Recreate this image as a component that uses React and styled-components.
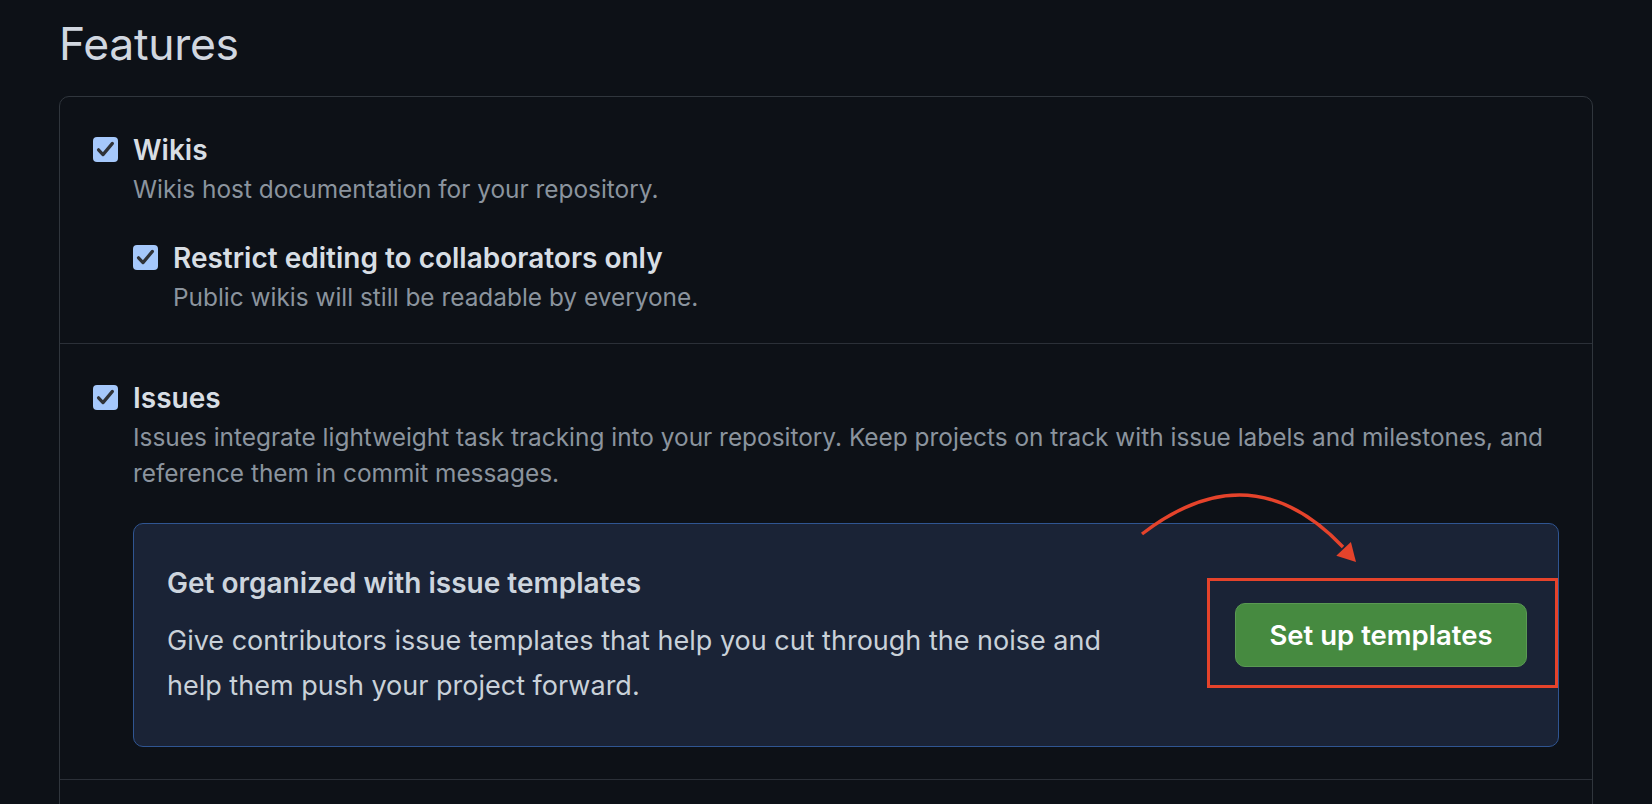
import styled, { createGlobalStyle } from "styled-components";

const GlobalStyle = createGlobalStyle`
  html, body {
    margin: 0;
    background: #0d1117;
  }
  body {
    font-family: Inter, "Liberation Sans", sans-serif;
    color: #e6edf3;
    overflow: hidden;
  }
`;

const Page = styled.div`
  padding: 16px 59px 0;
`;

const Heading = styled.h2`
  margin: 0 0 24px;
  font-size: 44.5px;
  line-height: 56px;
  font-weight: 400;
  letter-spacing: -0.3px;
  color: #d1d7e0;
`;

const Panel = styled.div`
  border: 1px solid #30363d;
  border-radius: 10px;
`;

const Section = styled.div`
  padding: ${(p) => p.$top || 37}px 33px ${(p) => p.$bottom || 28}px;
  min-height: ${(p) => p.$min || 0}px;
  & + & {
    border-top: 1px solid #2b3038;
  }
`;

const Option = styled.div`
  display: flex;
  gap: 15px;
  margin-top: ${(p) => (p.$nested ? "35px" : "0")};
`;

const CheckBox = styled.span`
  flex: none;
  width: 25px;
  height: 25px;
  margin-top: 3px;
  border-radius: 4px;
  background: #a5c8fb;
  display: flex;
  align-items: center;
  justify-content: center;
`;

const OptionBody = styled.div`
  flex: 1;
  min-width: 0;
`;

const Title = styled.div`
  font-size: 28px;
  line-height: 32px;
  font-weight: 600;
  color: #d8dee4;
`;

const Note = styled.div`
  margin-top: 5px;
  font-size: 24.4px;
  line-height: 36px;
  color: #8b949e;
`;

const Callout = styled.div`
  margin-top: 32px;
  display: flex;
  align-items: center;
  justify-content: space-between;
  gap: 40px;
  padding: 42px 31px 38px 33px;
  background: #1a2336;
  border: 1px solid #2f5592;
  border-radius: 10px;
`;

const CalloutText = styled.div`
  max-width: 960px;
`;

const CalloutTitle = styled.div`
  margin-bottom: 18px;
  font-size: 28px;
  line-height: 34px;
  font-weight: 600;
  color: #cdd5de;
`;

const CalloutNote = styled.div`
  font-size: 27px;
  line-height: 45px;
  color: #c9d1d9;
`;

const ButtonWrap = styled.div`
  position: relative;
  flex: none;
  margin-bottom: 4px;
`;

const Button = styled.button`
  width: 292px;
  height: 64px;
  border-radius: 10px;
  background: #468a40;
  border: 1px solid #5a9953;
  color: #ffffff;
  font-family: Inter, "Liberation Sans", sans-serif;
  font-size: 27.5px;
  font-weight: 600;
  cursor: pointer;
`;

const Highlight = styled.span`
  position: absolute;
  left: -28px;
  right: -31px;
  top: -25px;
  bottom: -21px;
  border: 3px solid #e5432b;
  pointer-events: none;
`;

const Arrow = styled.svg`
  position: absolute;
  left: -96px;
  top: -115px;
  overflow: visible;
  pointer-events: none;
`;

function Check() {
  return (
    <svg width="25" height="25" viewBox="0 0 25 25">
      <path
        d="M5.5 12.8 L10 17.6 L19.4 6.4"
        fill="none"
        stroke="#2f3237"
        strokeWidth="3.2"
        strokeLinecap="round"
        strokeLinejoin="round"
      />
    </svg>
  );
}

function Feature({ title, note, nested, children }) {
  return (
    <Option $nested={nested}>
      <CheckBox>
        <Check />
      </CheckBox>
      <OptionBody>
        <Title>{title}</Title>
        <Note>{note}</Note>
        {children}
      </OptionBody>
    </Option>
  );
}

export default function App() {
  return (
    <>
      <GlobalStyle />
      <Page>
        <Heading>Features</Heading>
        <Panel>
          <Section>
            <Feature
              title="Wikis"
              note="Wikis host documentation for your repository."
            >
              <Feature
                nested
                title="Restrict editing to collaborators only"
                note="Public wikis will still be readable by everyone."
              />
            </Feature>
          </Section>
          <Section $top={38} $bottom={32}>
            <Feature
              title="Issues"
              note="Issues integrate lightweight task tracking into your repository. Keep projects on track with issue labels and milestones, and reference them in commit messages."
            >
              <Callout>
                <CalloutText>
                  <CalloutTitle>Get organized with issue templates</CalloutTitle>
                  <CalloutNote>
                    Give contributors issue templates that help you cut through
                    the noise and help them push your project forward.
                  </CalloutNote>
                </CalloutText>
                <ButtonWrap>
                  <Button type="button">Set up templates</Button>
                  <Highlight />
                  <Arrow width="220" height="76" viewBox="0 0 220 76">
                    <path
                      d="M3 46 Q112 -38 204 59"
                      fill="none"
                      stroke="#e5432b"
                      strokeWidth="3.4"
                    />
                    <polygon points="217,74 211.9,54 197.3,67.8" fill="#e5432b" />
                  </Arrow>
                </ButtonWrap>
              </Callout>
            </Feature>
          </Section>
          <Section $min={80} />
        </Panel>
      </Page>
    </>
  );
}
